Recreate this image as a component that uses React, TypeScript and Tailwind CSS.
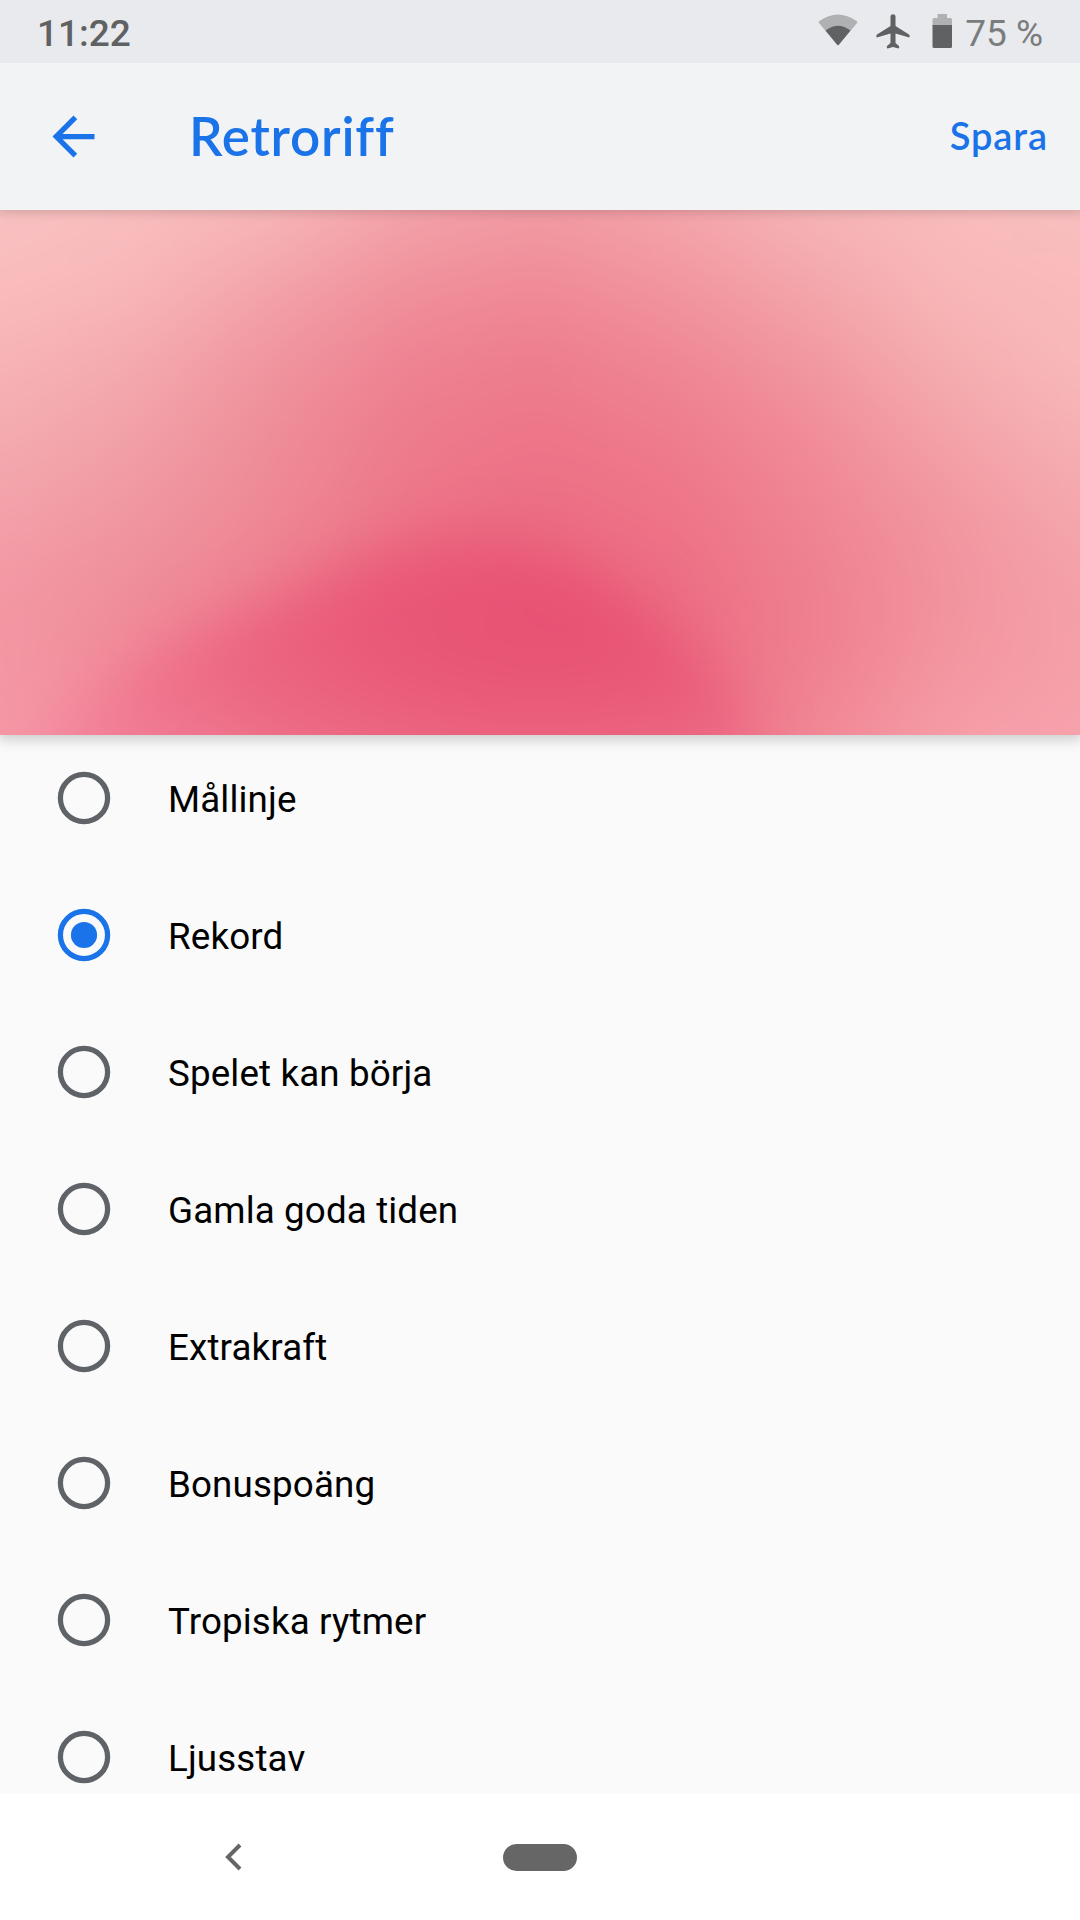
import { useState } from "react";

const sounds = [
  "Mållinje",
  "Rekord",
  "Spelet kan börja",
  "Gamla goda tiden",
  "Extrakraft",
  "Bonuspoäng",
  "Tropiska rytmer",
  "Ljusstav",
];

// Colour rows of the backdrop, 75px apart, each spread evenly from left to right
const backdropRows = [
  ["#f9c1c1", "#f9bdbe", "#f7b7b9", "#f3a4aa", "#f19ba3", "#f4a5aa", "#f6b5b7", "#f9bbbc", "#f8bfbf"],
  ["#f9bcbd", "#f8b7b9", "#f3a4aa", "#f0909b", "#f08a97", "#f2959f", "#f3a6ab", "#f8b7b8", "#f9babb"],
  ["#f7b4b6", "#f4aaae", "#f0959f", "#ee8392", "#ed7d8d", "#ef8794", "#f1989f", "#f5aeb0", "#f8b9ba"],
  ["#f4acb0", "#f1a0a7", "#ee8d98", "#ed7b8c", "#ed7588", "#ee7c8c", "#f18b97", "#f3a2a8", "#f6b1b4"],
  ["#f3a2ab", "#f097a1", "#ee8894", "#ed7789", "#ec6f85", "#ee7487", "#ef8593", "#f2969f", "#f4a8ae"],
  ["#f398a4", "#ef8e9a", "#ee8191", "#ed7086", "#ed6c83", "#ed6f85", "#ee7f8e", "#f2939e", "#f4a1a9"],
  ["#f496a3", "#f18b9a", "#ef7c92", "#ee7088", "#ed6e86", "#ed6f85", "#ef7f8e", "#f3959f", "#f5a0a9"],
  ["#f699a8", "#f48c9f", "#f18099", "#ef748c", "#ee7088", "#ed7087", "#f18795", "#f69da8", "#f7a2ad"],
];

function Backdrop() {
  return (
    <svg className="block h-full w-full" viewBox="0 0 1080 525" preserveAspectRatio="none">
      <defs>
        {backdropRows.map((row, i) => (
          <linearGradient key={i} id={`row-${i}`} gradientUnits="userSpaceOnUse" x1="0" x2="1080" y1="0" y2="0">
            {row.map((color, j) => (
              <stop key={j} offset={j / (row.length - 1)} stopColor={color} />
            ))}
          </linearGradient>
        ))}
        <linearGradient id="fade" x1="0" x2="0" y1="0" y2="1">
          <stop offset="0" stopColor="#000" />
          <stop offset="1" stopColor="#fff" />
        </linearGradient>
        {backdropRows.map((_, i) => (
          <mask key={i} id={`mask-${i}`} maskUnits="userSpaceOnUse" x="-120" y="-120" width="1320" height="765">
            <rect x="-120" y={(i - 1) * 75} width="1320" height="75" fill="url(#fade)" />
            <rect x="-120" y={i * 75} width="1320" height="765" fill="#fff" />
          </mask>
        ))}
        <radialGradient id="glow" gradientUnits="userSpaceOnUse" cx="0" cy="0" r="1" gradientTransform="translate(540 412) scale(540 235)">
          <stop offset="0" stopColor="#e75172" />
          <stop offset="0.3" stopColor="#e95877" />
          <stop offset="0.6" stopColor="#ec6782" />
          <stop offset="1" stopColor="#f28399" />
        </radialGradient>
        <filter id="smooth" filterUnits="userSpaceOnUse" x="-120" y="-120" width="1320" height="765" colorInterpolationFilters="sRGB">
          <feGaussianBlur stdDeviation="28" />
        </filter>
        <filter id="soft" filterUnits="userSpaceOnUse" x="-200" y="100" width="1400" height="700" colorInterpolationFilters="sRGB">
          <feGaussianBlur stdDeviation="28" />
        </filter>
      </defs>
      <g filter="url(#smooth)">
        {backdropRows.map((_, i) => (
          <rect
            key={i}
            x="-120"
            y="-120"
            width="1320"
            height="765"
            fill={`url(#row-${i})`}
            mask={i > 0 ? `url(#mask-${i})` : undefined}
          />
        ))}
      </g>
      <path
        d="M475 322C550 322 632 374 690 434C732 478 755 515 775 620L0 620C45 520 110 465 190 424C290 390 380 322 475 322Z"
        fill="url(#glow)"
        filter="url(#soft)"
      />
    </svg>
  );
}

function StatusBar() {
  return (
    <div className="z-20 flex h-[63px] shrink-0 items-center justify-between bg-[#e8eaed] pr-[37px] pl-[37px] text-[37px] leading-[63px] text-[#606163]">
      <span className="pt-[3px] font-medium">11:22</span>
      <div className="flex items-center">
        <svg className="h-[63px] w-[147px]" viewBox="0 0 147 63">
          {/* Wifi */}
          <path d="M1.200 23.200Q0 22 1.400 21Q20 8 38.600 21Q40 22 38.800 23.200L21 44.500Q20 45.800 19 44.500Z" fill="#b0b1b3" />
          <path d="M7.500 30.500Q20 21 32.500 30.500L21 44.500Q20 45.800 19 44.500Z" fill="#606163" />
          {/* Airplane */}
          <path
            d="M75 14.200a2.500 2.500 0 0 0-2.500 2.500V26L59 34.600Q57.500 36 58.800 37.500L72.500 33.600V43L69 46Q68.300 48 69.500 48.500L75 47L80.500 48.500Q81.700 48 81 46L77.500 43V33.600L91.200 37.500Q92.500 36 91 34.600L77.500 26V16.700A2.500 2.500 0 0 0 75 14.200Z"
            fill="#606163"
          />
          {/* Battery */}
          <path d="M119.500 14h9.500v4h3.500q1.500 0 1.500 1.500V26h-19.500v-6.500q0-1.500 1.500-1.500h3.500Z" fill="#b0b1b3" />
          <path d="M114.500 25h19.500v21.500q0 1.500-1.500 1.500h-16.500q-1.500 0-1.500-1.500Z" fill="#606163" />
        </svg>
        <span className="pt-[3px] text-[#7b7c7e]">75 %</span>
      </div>
    </div>
  );
}

export default function App() {
  const [selected, setSelected] = useState("Rekord");

  return (
    <div className="flex h-[1920px] w-[1080px] flex-col overflow-hidden bg-[#fafafa] font-['Roboto',sans-serif]">
      <StatusBar />

      {/* App bar */}
      <header className="z-10 flex h-[147px] shrink-0 items-center bg-[#f1f3f4] pr-[32px] pl-[42px] font-['Lato',sans-serif] font-semibold text-[#1a73e8] shadow-[0_1px_10px_2px_rgba(0,0,0,0.15)]">
        <button aria-label="Tillbaka">
          <svg className="size-[63px]" viewBox="0 0 24 24" fill="currentColor">
            <path d="M20 11H7.830l5.590-5.590L12 4l-8 8 8 8 1.410-1.410L7.830 13H20v-2z" />
          </svg>
        </button>
        <h1 className="ml-[84px] flex-1 pb-[1px] text-[53px] tracking-[0.8px]">Retroriff</h1>
        <button className="pb-[3px] text-[38px] tracking-[0.9px]">Spara</button>
      </header>

      <div className="z-[5] h-[525px] shrink-0 shadow-[0_3px_12px_2px_rgba(0,0,0,0.18)]">
        <Backdrop />
      </div>

      {/* Sound list */}
      <main className="-mt-[6px] flex min-h-0 flex-1 flex-col overflow-hidden">
        {sounds.map((name) => {
          const isActive = name === selected;
          return (
            <button
              key={name}
              onClick={() => setSelected(name)}
              className="flex h-[137px] shrink-0 items-center pl-[52px] text-left text-[36.750px] text-black"
            >
              <svg className={isActive ? "size-16 text-[#1a73e8]" : "size-16 text-[#5f6368]"} viewBox="0 0 64 64">
                <circle cx="32" cy="32" r="23.600" fill="none" stroke="currentColor" strokeWidth="5.250" />
                {isActive && <circle cx="32" cy="32" r="13.100" fill="currentColor" />}
              </svg>
              <span className="ml-[52px] pt-[5px] tracking-[0.130px]">{name}</span>
            </button>
          );
        })}
      </main>

      {/* Navigation bar */}
      <nav className="flex h-[126px] shrink-0 items-center bg-white pl-[225px] text-[#666666]">
        <svg className="h-[28px] w-[18px]" viewBox="0 0 18 28" fill="none" stroke="currentColor" strokeWidth="4">
          <path d="M15 2L3 14l12 12" />
        </svg>
        <div className="ml-[260px] h-[27px] w-[74px] rounded-full bg-[#666666]" />
      </nav>
    </div>
  );
}
